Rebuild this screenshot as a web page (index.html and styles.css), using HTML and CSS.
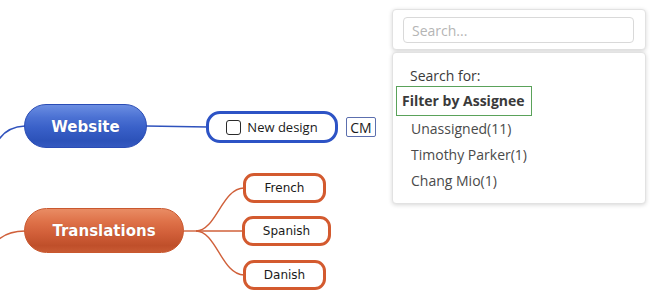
FILE: index.html
```html
<!DOCTYPE html>
<html>
<head>
<meta charset="utf-8">
<link rel="stylesheet" href="styles.css">
</head>
<body>
<div class="canvas">
  <svg class="links" width="650" height="300" viewBox="0 0 650 300">
    <path class="blue" d="M -2 141 Q 6 127 25 126"/>
    <path class="blue" d="M 146 126 L 208 127"/>
    <path class="orange" d="M -2 240 Q 8 231 25 231"/>
    <path class="orange" d="M 183 231 L 196 231"/>
    <path class="orange" d="M 196 231 C 216 231 222 188 244 188"/>
    <path class="orange" d="M 196 231 L 244 231"/>
    <path class="orange" d="M 196 231 C 216 231 222 275 244 275"/>
  </svg>

  <div class="node topic website">Website</div>
  <div class="node task new-design"><span class="check"></span><span>New design</span></div>
  <div class="node tag cm">CM</div>

  <div class="node topic translations">Translations</div>
  <div class="node leaf french">French</div>
  <div class="node leaf spanish">Spanish</div>
  <div class="node leaf danish">Danish</div>
</div>

<div class="dropdown">
  <div class="search-panel">
    <input class="search-input" type="text" placeholder="Search...">
  </div>
  <ul class="menu">
    <li class="menu-label">Search for:</li>
    <li class="menu-filter">Filter by Assignee</li>
    <li class="menu-item">Unassigned(11)</li>
    <li class="menu-item">Timothy Parker(1)</li>
    <li class="menu-item">Chang Mio(1)</li>
  </ul>
</div>
</body>
</html>
```

FILE: styles.css
```css
html, body {
  margin: 0;
  padding: 0;
  background: #ffffff;
}

body {
  width: 650px;
  height: 300px;
  overflow: hidden;
  position: relative;
}

.canvas {
  position: relative;
  width: 650px;
  height: 300px;
}

.links {
  position: absolute;
  left: 0;
  top: 0;
}

.links path {
  fill: none;
  stroke-width: 1.4;
}

.links .blue { stroke: #2f52bd; }
.links .orange { stroke: #d0603a; }

.node {
  position: absolute;
  box-sizing: border-box;
  display: flex;
  align-items: center;
  justify-content: center;
}

.topic {
  color: #ffffff;
  font-family: "DejaVu Sans", Verdana, sans-serif;
  font-weight: bold;
  font-size: 15px;
  border-radius: 23px;
  padding-top: 1px;
  text-shadow: 0 0 1px rgba(0, 0, 0, 0.25);
}

.website {
  left: 24px;
  top: 104px;
  width: 123px;
  height: 44px;
  border: 1.5px solid #2a4cb5;
  background: linear-gradient(to bottom, #6b8ee2 0%, #4b71d3 30%, #3960c8 55%, #2c52b9 85%, #3459c0 100%);
}

.translations {
  left: 24px;
  top: 208px;
  width: 160px;
  height: 45px;
  border: 1.5px solid #c9582f;
  background: linear-gradient(to bottom, #e98c64 0%, #de7148 30%, #d2603a 55%, #bf4f2a 85%, #c85a33 100%);
}

.task {
  left: 206px;
  top: 111px;
  width: 132px;
  height: 32px;
  border: 3px solid #2d53c5;
  border-radius: 14px;
  background: #ffffff;
  gap: 6px;
  font-family: "Open Sans", sans-serif;
  font-size: 13px;
  color: #1a1a1a;
}

.check {
  width: 15px;
  height: 15px;
  box-sizing: border-box;
  border: 1.5px solid #2a2a2a;
  border-radius: 3px;
  background: #ffffff;
}

.tag {
  left: 346px;
  top: 117px;
  width: 30px;
  height: 20px;
  border: 1px solid #5c6fae;
  border-radius: 2px;
  background: #ffffff;
  font-family: "Open Sans", sans-serif;
  font-size: 14px;
  color: #1a1a1a;
}

.leaf {
  border: 3px solid #d35a2f;
  border-radius: 11px;
  background: #ffffff;
  font-family: "DejaVu Sans", Verdana, sans-serif;
  font-size: 12px;
  color: #1a1a1a;
}

.french { left: 243px; top: 173px; width: 83px; height: 30px; }
.spanish { left: 242px; top: 216px; width: 89px; height: 30px; }
.danish { left: 243px; top: 260px; width: 83px; height: 30px; }

/* Dropdown overlay */
.dropdown {
  position: absolute;
  left: 392px;
  top: 9px;
  width: 254px;
  display: flex;
  flex-direction: column;
  gap: 2px;
  font-family: "Open Sans", sans-serif;
  font-size: 14px;
}

.search-panel {
  box-sizing: border-box;
  height: 41px;
  padding: 7px 11px 0 10px;
  border: 1px solid #e2e2e2;
  border-radius: 4px;
  background: #ffffff;
  box-shadow: 0 1px 4px rgba(0, 0, 0, 0.16);
}

.search-input {
  display: block;
  box-sizing: border-box;
  width: 231px;
  height: 26px;
  margin: 0;
  padding: 0 8px;
  border: 1px solid #d9d9d9;
  border-radius: 4px;
  font-family: "Open Sans", sans-serif;
  font-size: 14px;
  color: #333;
  outline: none;
}

.search-input::placeholder {
  color: #b5b5b5;
}

.menu {
  list-style: none;
  margin: 0;
  box-sizing: border-box;
  height: 152px;
  padding: 12px 0 0 0;
  border: 1px solid #e2e2e2;
  border-radius: 4px;
  background: #ffffff;
  box-shadow: 0 1px 4px rgba(0, 0, 0, 0.16);
  color: #4a4a4a;
}

.menu-label {
  line-height: 21px;
  height: 21px;
  padding-left: 17px;
  color: #3a3a3a;
}

.menu-filter {
  box-sizing: border-box;
  width: 136px;
  height: 30px;
  line-height: 28px;
  margin-left: 3px;
  padding-left: 5px;
  border: 1px solid #5aa25a;
  font-weight: bold;
  color: #3a3a3a;
  white-space: nowrap;
}

.menu-item {
  line-height: 26px;
  height: 26px;
  padding-left: 18px;
}
```
